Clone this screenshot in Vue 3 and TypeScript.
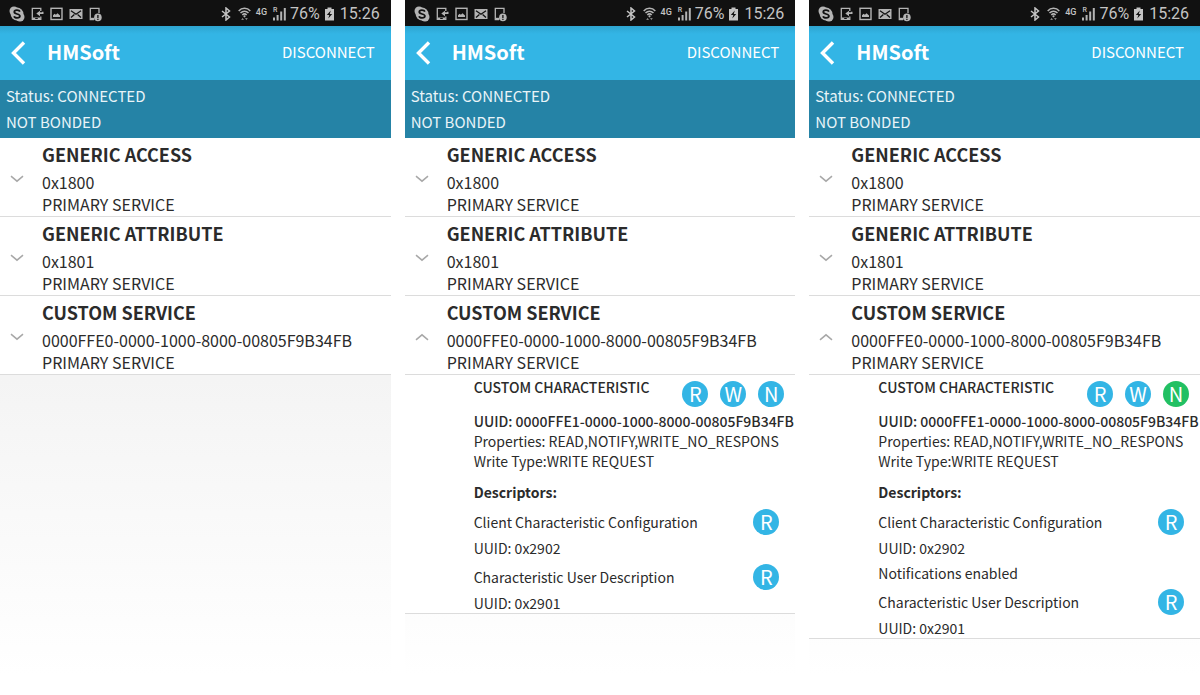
<script setup lang="ts">
import { ref } from 'vue'

interface Action { letter: string; label: string; active?: boolean }
interface Descriptor { name: string; uuid: string; note?: string }
interface Characteristic {
  name: string
  uuid: string
  properties: string
  writeType: string
  actions: Action[]
  descriptors: Descriptor[]
}
interface Service { name: string; uuid: string; open: boolean; characteristic?: Characteristic }
interface Screen { id: number; services: Service[] }

function makeCharacteristic(notifying: boolean): Characteristic {
  return {
    name: 'CUSTOM CHARACTERISTIC',
    uuid: '0000FFE1-0000-1000-8000-00805F9B34FB',
    properties: 'READ,NOTIFY,WRITE_NO_RESPONS',
    writeType: 'WRITE REQUEST',
    actions: [
      { letter: 'R', label: 'Read' },
      { letter: 'W', label: 'Write' },
      { letter: 'N', label: 'Notify', active: notifying },
    ],
    descriptors: [
      {
        name: 'Client Characteristic Configuration',
        uuid: '0x2902',
        note: notifying ? 'Notifications enabled' : undefined,
      },
      { name: 'Characteristic User Description', uuid: '0x2901' },
    ],
  }
}

function makeScreen(id: number, open: boolean, notifying: boolean): Screen {
  return {
    id,
    services: [
      { name: 'GENERIC ACCESS', uuid: '0x1800', open: false },
      { name: 'GENERIC ATTRIBUTE', uuid: '0x1801', open: false },
      {
        name: 'CUSTOM SERVICE',
        uuid: '0000FFE0-0000-1000-8000-00805F9B34FB',
        open,
        characteristic: makeCharacteristic(notifying),
      },
    ],
  }
}

const screens = ref<Screen[]>([
  makeScreen(1, false, false),
  makeScreen(2, true, false),
  makeScreen(3, true, true),
])
</script>

<template>
  <main class="screens">
    <section v-for="screen in screens" :key="screen.id" class="phone">
      <div class="system-bar">
        <div class="system-icons">
          <svg width="16" height="16" viewBox="0 0 16 16" aria-hidden="true">
            <circle cx="5" cy="5" r="4.5" fill="#b4b4b4" />
            <circle cx="11" cy="11" r="4.5" fill="#b4b4b4" />
            <circle cx="8" cy="8" r="6.4" fill="#b4b4b4" />
            <path d="M10.9 5.6C10.2 3.6 5.3 3.4 5.3 6c0 2.5 5.6 1.5 5.6 4 0 2.6-5.2 2.4-5.8.2" fill="none" stroke="#111" stroke-width="1.8" />
          </svg>
          <svg width="13" height="14" viewBox="0 0 13 14" aria-hidden="true">
            <path d="M9.800 4V1.300H1.300v11h8.500V9.500" fill="none" stroke="#b4b4b4" stroke-width="1.300" />
            <path d="M2 10.500h7v2H2z" fill="#b4b4b4" />
            <path d="M4.200 11h2.600v1H4.200z" fill="#111" />
            <path d="M12.500 4.800V7H9v2.300L5.300 6.500 9 3.700v1.600h2V4.800z" fill="#b4b4b4" />
          </svg>
          <svg width="13" height="14" viewBox="0 0 13 14" aria-hidden="true">
            <rect x="1" y="1.300" width="11" height="11.200" fill="none" stroke="#b4b4b4" stroke-width="1.400" />
            <path d="M3 10V8.200l1.600-1.400 1.300 1 1.600-1.600L10 8.500V10z" fill="#b4b4b4" />
          </svg>
          <svg width="14" height="12" viewBox="0 0 14 12" aria-hidden="true">
            <rect x="0.500" y="1" width="13" height="10" fill="#b4b4b4" />
            <path d="M2 2.800l5 3.400 5-3.400M2 9.500l3.400-3M12 9.500l-3.400-3" fill="none" stroke="#111" stroke-width="1.300" />
          </svg>
          <svg width="13" height="15" viewBox="0 0 13 15" aria-hidden="true">
            <path d="M10 6V1.300H1.300v11.200H5" fill="none" stroke="#b4b4b4" stroke-width="1.300" />
            <path d="M2 10.800h3.500v1.700H2z" fill="#b4b4b4" />
            <circle cx="8.900" cy="10.400" r="3.800" fill="#b4b4b4" />
            <path d="M8.900 7.900v3M8.900 11.700v1.300" stroke="#111" stroke-width="1.300" />
          </svg>
        </div>
        <div class="system-status">
          <svg width="10" height="14" viewBox="0 0 10 14" aria-hidden="true">
            <path d="M1 4l7.500 6L5 13V1l3.500 3L1 10" fill="none" stroke="#c4c4c4" stroke-width="1.500" />
          </svg>
          <svg class="wifi" width="13" height="14" viewBox="0 0 13 14" aria-hidden="true">
            <path d="M.7 4C3.800.4 9.200.4 12.300 4M2.500 6c2.300-2.400 5.700-2.400 8 0M4.300 8c1.300-1.300 3.100-1.300 4.400 0" fill="none" stroke="#b4b4b4" stroke-width="1.500" />
            <circle cx="6.500" cy="9.300" r="1.100" fill="#b4b4b4" />
            <path d="M3.200 13l1.400-2.300L6 13zM7 11l1.400 2.300L9.800 11z" fill="#808080" />
          </svg>
          <span class="network">4G</span>
          <div class="signal">
            <span class="roaming">R</span>
            <svg width="13" height="14" viewBox="0 0 13 14" aria-hidden="true">
              <path d="M0 10.500h2v3H0zM3.600 8h2v5.500h-2zM7.200 4.500h2v9h-2zM10.800 1h2v12.500h-2z" fill="#b4b4b4" />
            </svg>
          </div>
          <span class="percent">76%</span>
          <svg class="battery" width="9" height="14" viewBox="0 0 9 14" aria-hidden="true">
            <path d="M2.500.5h4V2H9v11.500H0V2h2.500z" fill="#c4c4c4" />
            <path d="M5.800 3.500L1.800 8h2.500l-1 3.500L7.200 7H4.800z" fill="#111" />
          </svg>
          <time>15:26</time>
        </div>
      </div>

      <header class="app-bar">
        <button class="back" type="button" aria-label="Back">
          <svg width="16" height="26" viewBox="0 0 16 26" aria-hidden="true">
            <path d="M14 2.500L3.500 13 14 23.500" fill="none" stroke="#fff" stroke-width="3.400" />
          </svg>
        </button>
        <h1>HMSoft</h1>
        <button class="disconnect" type="button">DISCONNECT</button>
      </header>

      <div class="connection">
        <p>Status: CONNECTED</p>
        <p>NOT BONDED</p>
      </div>

      <ul class="services">
        <li v-for="service in screen.services" :key="service.name">
          <button class="service" type="button" :aria-expanded="service.open" @click="service.open = !service.open">
            <svg class="chevron" :class="{ up: service.open }" width="14" height="8" viewBox="0 0 14 8" aria-hidden="true">
              <path d="M1 1.200l6 5 6-5" fill="none" stroke="#a8a8a8" stroke-width="1.500" />
            </svg>
            <span class="service-text">
              <strong>{{ service.name }}</strong>
              <span>{{ service.uuid }}</span>
              <span>PRIMARY SERVICE</span>
            </span>
          </button>

          <article v-if="service.open && service.characteristic" class="characteristic">
            <div class="characteristic-head">
              <h2>{{ service.characteristic.name }}</h2>
              <div class="actions">
                <button
                  v-for="action in service.characteristic.actions"
                  :key="action.letter"
                  class="round"
                  :class="{ active: action.active }"
                  type="button"
                  :aria-label="action.label"
                >{{ action.letter }}</button>
              </div>
            </div>
            <p class="uuid">UUID: {{ service.characteristic.uuid }}</p>
            <p>Properties: {{ service.characteristic.properties }}</p>
            <p>Write Type:{{ service.characteristic.writeType }}</p>
            <h3>Descriptors:</h3>
            <div v-for="descriptor in service.characteristic.descriptors" :key="descriptor.uuid" class="descriptor">
              <div class="descriptor-head">
                <span>{{ descriptor.name }}</span>
                <button class="round" type="button" aria-label="Read">R</button>
              </div>
              <p>UUID: {{ descriptor.uuid }}</p>
              <p v-if="descriptor.note">{{ descriptor.note }}</p>
            </div>
          </article>
        </li>
      </ul>
    </section>
  </main>
</template>

<style>
body {
  margin: 0;
  background: #fff;
}
</style>

<style scoped>
.screens {
  display: grid;
  grid-template-columns: repeat(3, minmax(0, 1fr));
  gap: 14px;
  min-height: 100vh;
  padding-bottom: 20px;
  box-sizing: border-box;
  font-family: "Noto Sans CJK SC", "Noto Sans", sans-serif;
  color: #2b2b2b;
}
.phone {
  background: linear-gradient(#e6e6e6, #fff);
}
h1, h2, h3, p, ul {
  margin: 0;
  padding: 0;
}
button {
  margin: 0;
  padding: 0;
  border: 0;
  background: none;
  font: inherit;
  color: inherit;
  cursor: pointer;
}
svg {
  display: block;
  flex: none;
}
.system-bar {
  display: flex;
  align-items: center;
  justify-content: space-between;
  box-sizing: border-box;
  height: 26px;
  padding: 2px 11px 0 9px;
  background: #111;
  color: #c4c4c4;
  font-family: Roboto, sans-serif;
}
.system-icons {
  display: flex;
  align-items: center;
  gap: 6px;
}
.system-status {
  display: flex;
  align-items: center;
  font-size: 16px;
  line-height: 20px;
}
.wifi {
  margin-left: 7px;
}
.network {
  align-self: flex-start;
  margin: 0 6px 0 5px;
  font-size: 9px;
  line-height: 16px;
  font-weight: 500;
}
.signal {
  position: relative;
}
.roaming {
  position: absolute;
  top: 0;
  left: 0;
  font-size: 7px;
  line-height: 7px;
  font-weight: 500;
}
.percent {
  margin: 0 5px 0 4px;
}
.battery {
  margin-right: 6px;
}
.app-bar {
  display: flex;
  align-items: center;
  height: 54px;
  padding: 0 16px 0 10px;
  background: linear-gradient(#2ea4d0, #33b5e5 8px);
  color: #fff;
}
.app-bar h1 {
  flex: 1;
  margin-left: 21px;
  padding-bottom: 2px;
  font-size: 20px;
  line-height: 28px;
  font-weight: 700;
}
.disconnect {
  padding-bottom: 2px;
  font-size: 15px;
  line-height: 24px;
}
.connection {
  padding: 3px 6px;
  background: #2583a6;
  color: #e9f4f8;
  font-size: 15px;
  line-height: 26px;
}
.services {
  list-style: none;
  background: #fff;
}
.services li {
  border-bottom: 1px solid #dcdcdc;
}
.service {
  display: flex;
  align-items: center;
  width: 100%;
  padding: 4px 10px 1px;
  text-align: left;
}
.service-text {
  display: flex;
  flex-direction: column;
  margin-left: 18px;
  font-size: 16px;
  line-height: 22px;
}
.service-text strong {
  margin-bottom: 5px;
  font-size: 18px;
  line-height: 24px;
}
.chevron.up {
  transform: rotate(180deg);
}
.characteristic {
  padding: 0 0 1px 69px;
  border-top: 1px solid #dcdcdc;
  font-size: 14px;
  line-height: 20px;
}
.characteristic-head {
  display: flex;
  justify-content: space-between;
  padding: 2px 11px 0 0;
}
.characteristic h2 {
  font-size: 14px;
  font-weight: 500;
}
.actions {
  display: flex;
  gap: 12px;
  padding-top: 4px;
}
.round {
  width: 26px;
  height: 26px;
  border-radius: 50%;
  background: #33b5e5;
  color: #fff;
  font-size: 20px;
  line-height: 24px;
  text-align: center;
}
.round.active {
  background: #22c063;
}
.uuid {
  margin-top: 4px;
  font-weight: 500;
  white-space: nowrap;
}
.characteristic h3 {
  margin: 11px 0 7px;
  font-size: 14px;
  font-weight: 700;
}
.descriptor {
  padding-right: 16px;
}
.descriptor + .descriptor {
  margin-top: 7px;
}
.descriptor-head {
  display: flex;
  align-items: center;
  justify-content: space-between;
  margin-bottom: 4px;
}
.descriptor p {
  line-height: 18px;
}
.descriptor p + p {
  margin-top: 7px;
}
</style>
